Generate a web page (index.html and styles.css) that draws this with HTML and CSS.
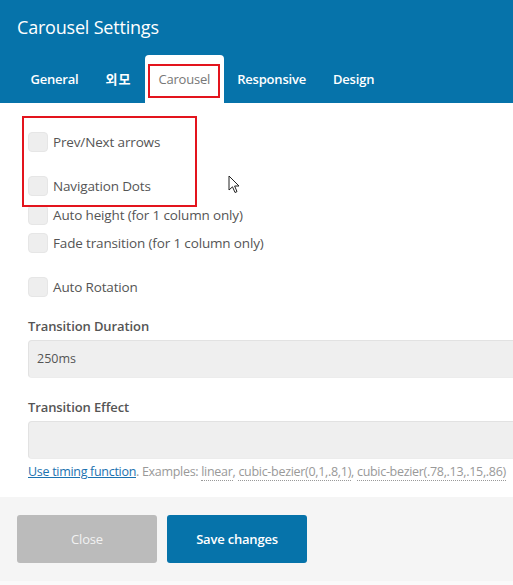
FILE: index.html
```html
<!DOCTYPE html>
<html lang="en">
<head>
    <meta charset="UTF-8">
    <meta name="viewport" content="width=device-width, initial-scale=1.0">
    <title>Carousel Settings</title>
    <link rel="stylesheet" href="styles.css">
</head>
<body>
    <div class="modal">
        <div class="modal-header">
            <h2 class="modal-title">Carousel Settings</h2>
            <ul class="tabs">
                <li class="tab">General</li>
                <li class="tab tab-ko">외모</li>
                <li class="tab active">Carousel<span class="mark-tab"></span></li>
                <li class="tab">Responsive</li>
                <li class="tab">Design</li>
            </ul>
        </div>

        <div class="modal-body">
            <div class="marked-group">
                <label class="check-row"><span class="check"></span>Prev/Next arrows</label>
                <label class="check-row gap-lg"><span class="check"></span>Navigation Dots</label>
            </div>
            <label class="check-row after-group"><span class="check"></span>Auto height (for 1 column only)</label>
            <label class="check-row"><span class="check"></span>Fade transition (for 1 column only)</label>
            <label class="check-row gap-lg"><span class="check"></span>Auto Rotation</label>

            <div class="field">
                <div class="field-label">Transition Duration</div>
                <div class="field-input">250ms</div>
            </div>
            <div class="field">
                <div class="field-label">Transition Effect</div>
                <div class="field-input"></div>
                <p class="help">
                    <a href="#">Use timing function</a>. Examples:
                    <span class="ex">linear</span>,
                    <span class="ex">cubic-bezier(0,1,.8,1)</span>,
                    <span class="ex">cubic-bezier(.78,.13,.15,.86)</span>
                </p>
            </div>

            <!-- mouse cursor in the shot -->
            <svg class="cursor" width="13" height="20" viewBox="0 0 13 20">
                <path d="M1 1 L1 15 L4.5 11.8 L7 17.5 L9 16.6 L6.6 11 L11 11 Z" fill="#fff" stroke="#222" stroke-width="1" stroke-linejoin="round"/>
            </svg>
        </div>

        <div class="modal-footer">
            <button class="btn btn-close">Close</button>
            <button class="btn btn-save">Save changes</button>
        </div>
    </div>
</body>
</html>
```

FILE: styles.css
```css
* {
    margin: 0;
    padding: 0;
    box-sizing: border-box;
}

body {
    font-family: "Open Sans", "Noto Sans CJK KR", sans-serif;
    background: #fafafa;
    color: #444;
    overflow: hidden;
}

/* modal is wider than the window, right side is cut off */
.modal {
    width: 540px;
    background: #fff;
    box-shadow: 0 1px 3px rgba(0, 0, 0, 0.25);
}

/* Header */
.modal-header {
    background: #0673aa;
    padding: 14px 0 0 17px;
}

.modal-title {
    color: #fff;
    font-size: 18px;
    font-weight: 400;
    line-height: 26px;
    letter-spacing: -0.2px;
}

.tabs {
    list-style: none;
    display: flex;
    margin-top: 15px;
}

.tab {
    position: relative;
    padding: 14px 13.5px 0;
    height: 48px;
    font-size: 13px;
    font-weight: 600;
    color: #fff;
    letter-spacing: -0.2px;
    line-height: 20px;
}

.tab-ko {
    letter-spacing: 1px;
}

.tab.active {
    background: #fff;
    color: #777;
    font-weight: 400;
    border-radius: 4px 4px 0 0;
}

.mark-tab {
    position: absolute;
    left: 3px;
    right: 4px;
    top: 9px;
    bottom: 5px;
    border: 2px solid #e3141d;
}

/* Body */
.modal-body {
    position: relative;
    padding: 13px 0 16px 28px;
}

.marked-group {
    position: relative;
    padding: 12px 0 3px;
}

.marked-group::after {
    content: "";
    position: absolute;
    left: -6px;
    top: 0;
    width: 171px;
    height: 87px;
    border: 2px solid #e3141d;
}

.check-row {
    display: flex;
    align-items: center;
    height: 28px;
    font-size: 13.5px;
    color: #555;
    letter-spacing: -0.15px;
}

.check-row.gap-lg {
    margin-top: 16px;
}

.check-row.after-group {
    margin-top: -2px;
}

.check {
    width: 20px;
    height: 20px;
    background: #eee;
    border: 1px solid #e6e6e6;
    border-radius: 4px;
    margin-right: 5px;
}

.field {
    margin-top: 16px;
}

.field + .field {
    margin-top: 20px;
}

.field-label {
    font-size: 13px;
    font-weight: 600;
    color: #555;
    letter-spacing: -0.1px;
    line-height: 18px;
    margin-bottom: 5px;
}

.field-input {
    height: 38px;
    background: #efefef;
    border: 1px solid #e2e2e2;
    border-bottom-color: #ececec;
    border-radius: 4px 0 0 4px;
    padding: 0 8px;
    font-size: 12.5px;
    color: #555;
    line-height: 36px;
}

.help {
    margin-top: 4px;
    font-size: 12.5px;
    color: #999;
    letter-spacing: -0.3px;
    white-space: nowrap;
    line-height: 18px;
}

.help a {
    color: #1b72b0;
}

.help .ex {
    border-bottom: 1px dotted #999;
}

.cursor {
    position: absolute;
    left: 228px;
    top: 72px;
}

/* Footer */
.modal-footer {
    background: #f5f5f5;
    display: flex;
    gap: 10px;
    padding: 18px 17px 18px;
}

.btn {
    width: 140px;
    height: 48px;
    border: none;
    border-radius: 3px;
    font-family: inherit;
    font-size: 13px;
    letter-spacing: -0.2px;
    color: #fff;
}

.btn-close {
    background: #bbbbbb;
    color: #f2f2f2;
}

.btn-save {
    background: #0673aa;
    font-weight: 600;
}
```
